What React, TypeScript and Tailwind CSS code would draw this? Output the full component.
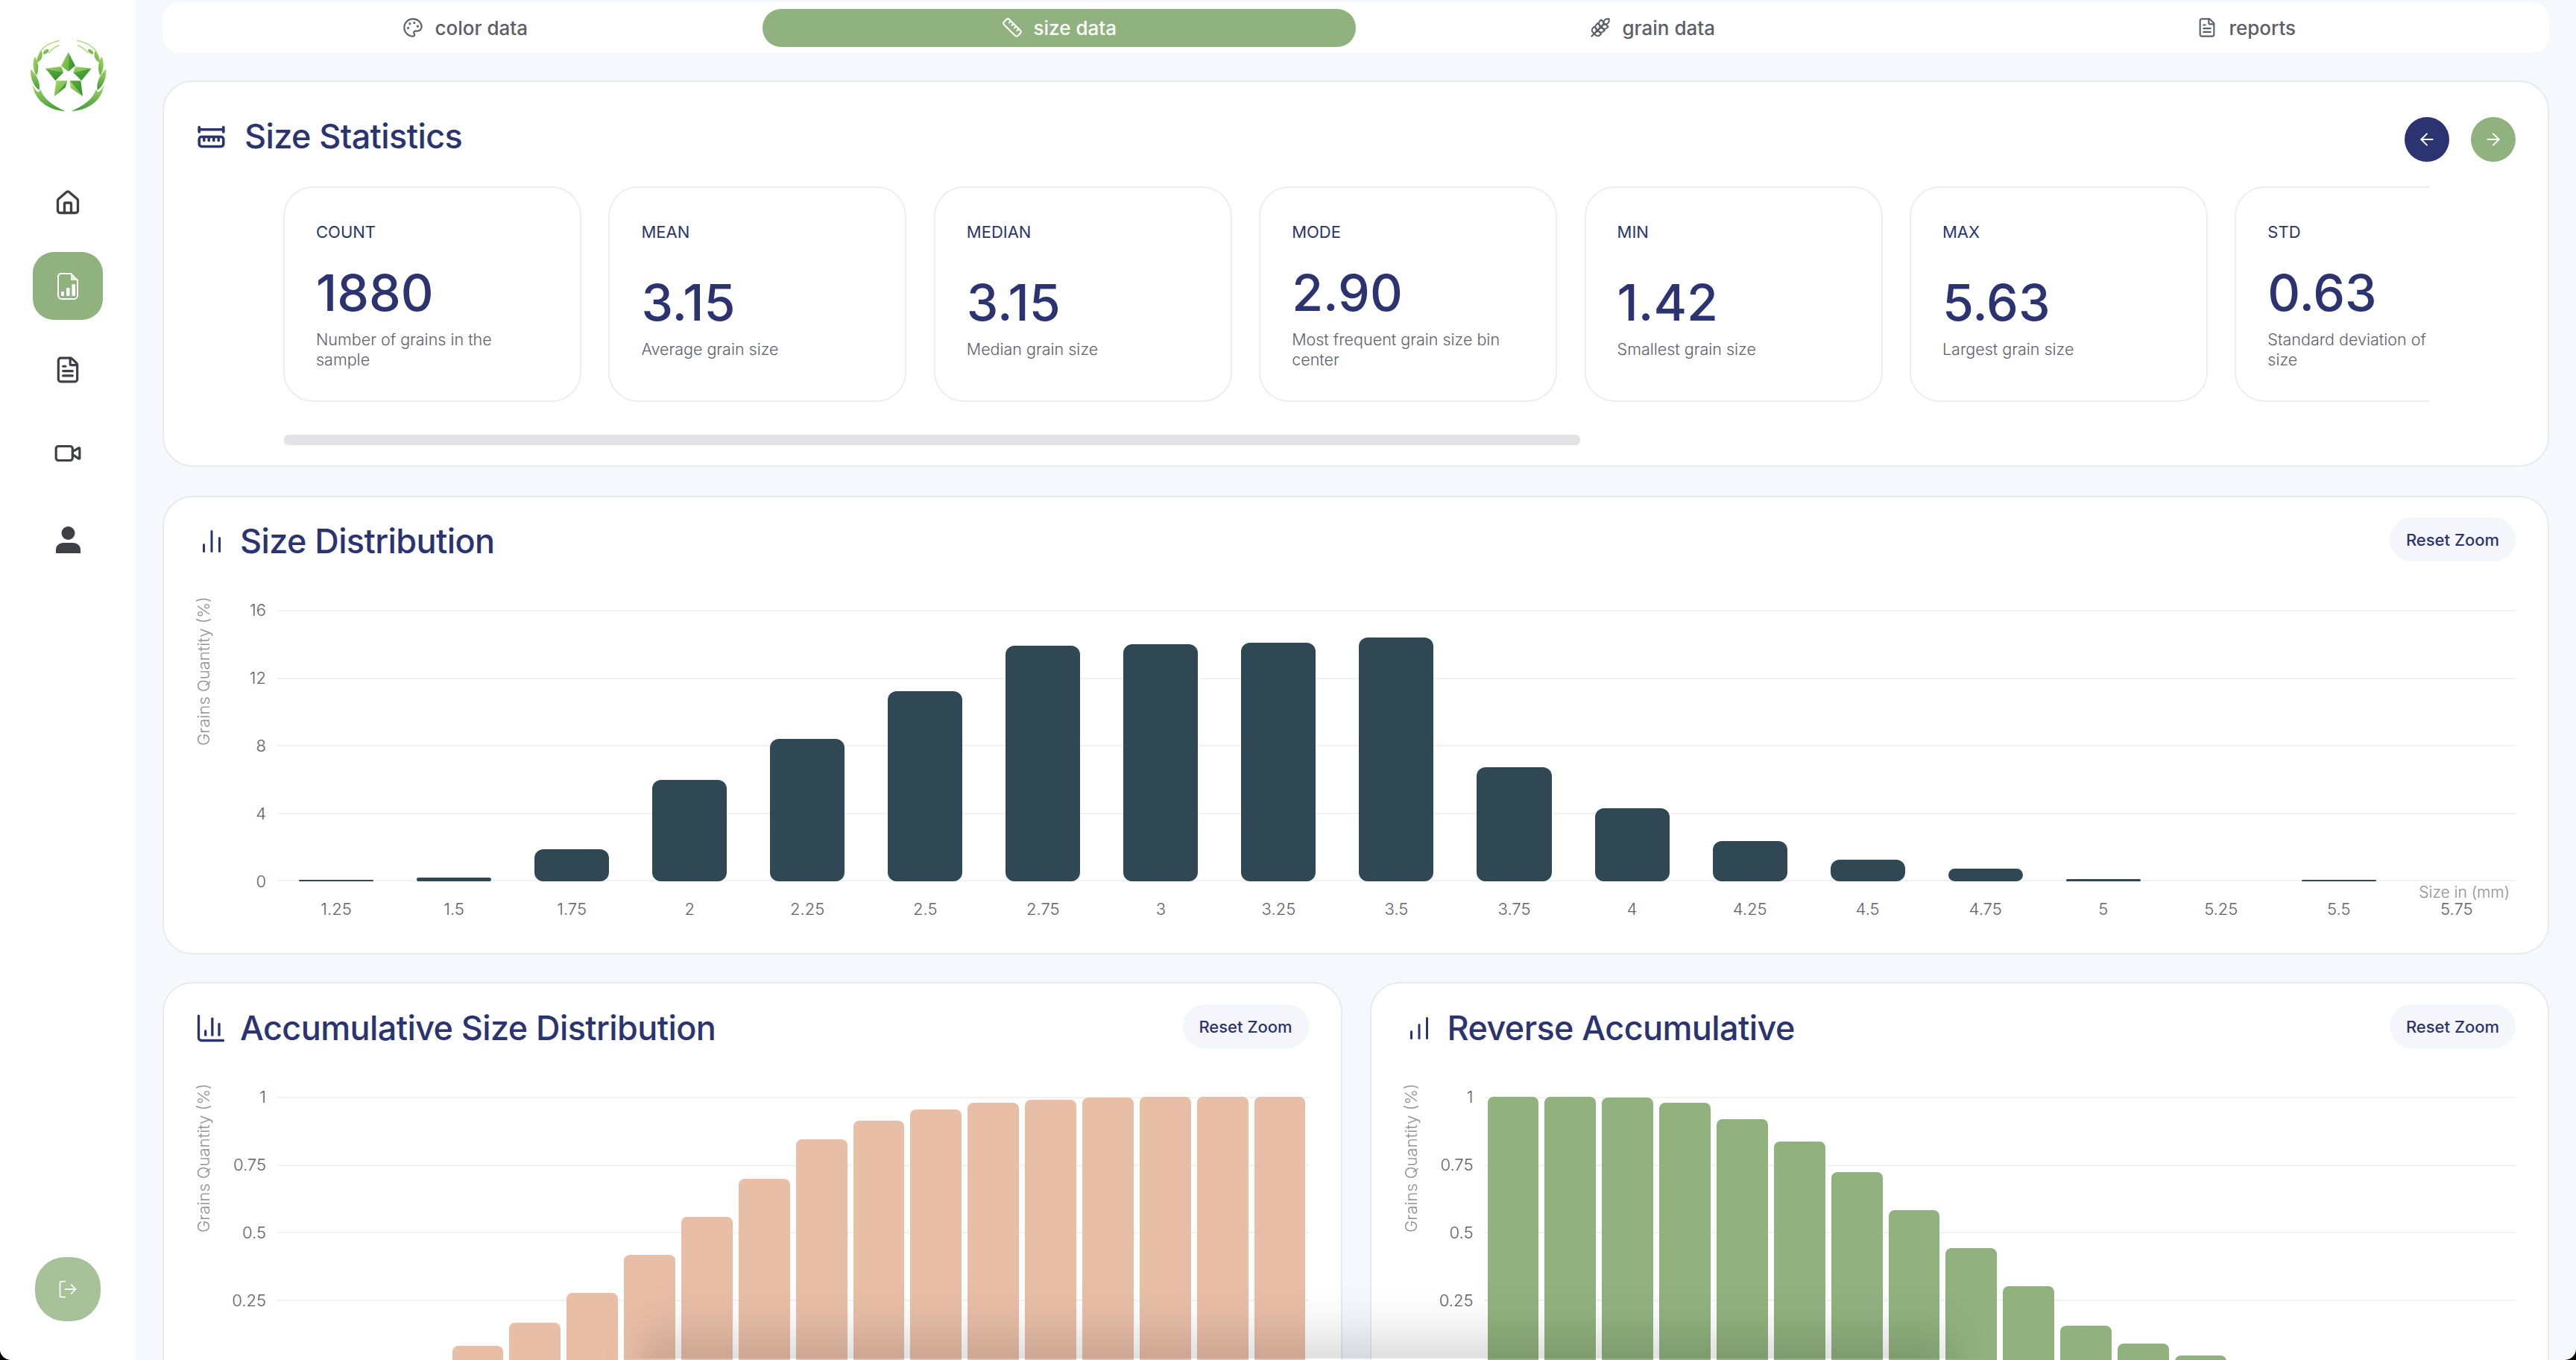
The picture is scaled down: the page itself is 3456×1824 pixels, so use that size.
import {
  ArrowLeft,
  ArrowRight,
  ChartColumn,
  ChartNoAxesColumn,
  ChartNoAxesColumnIncreasing,
  FileText,
  House,
  LogOut,
  Palette,
  Ruler,
  RulerDimensionLine,
  Video,
  Wheat,
} from "lucide-react";
import type { ReactNode } from "react";

const stats = [
  { label: "COUNT", value: "1880", desc: "Number of grains in the sample" },
  { label: "MEAN", value: "3.15", desc: "Average grain size" },
  { label: "MEDIAN", value: "3.15", desc: "Median grain size" },
  { label: "MODE", value: "2.90", desc: "Most frequent grain size bin center" },
  { label: "MIN", value: "1.42", desc: "Smallest grain size" },
  { label: "MAX", value: "5.63", desc: "Largest grain size" },
  { label: "STD", value: "0.63", desc: "Standard deviation of grain size" },
];

const sizeBars = [
  ["1.25", 2],
  ["1.5", 5],
  ["1.75", 43],
  ["2", 136],
  ["2.25", 191],
  ["2.5", 255],
  ["2.75", 316],
  ["3", 318],
  ["3.25", 320],
  ["3.5", 327],
  ["3.75", 153],
  ["4", 98],
  ["4.25", 54],
  ["4.5", 29],
  ["4.75", 17],
  ["5", 3],
  ["5.25", 0],
  ["5.5", 2],
  ["5.75", 0],
] as const;

const accBars = [0, 0, 0, 30, 61, 101, 152, 203, 254, 307, 332, 347, 356, 360, 363, 364, 364, 364];
const revBars = [364, 364, 363, 356, 334, 304, 263, 212, 161, 110, 57, 33, 17, 0, 0, 0, 0, 0];

const Wreath = () => (
  <>
    <path d="M68 222C78 285 130 322 200 328C150 305 112 280 100 238C95 262 80 245 68 222Z" fill="url(#leaf)" />
    <path d="M60 158C58 190 70 225 95 243C100 210 85 180 60 158Z" fill="url(#leaf)" />
    <path d="M78 108C65 130 70 165 84 184C95 160 92 130 78 108Z" fill="url(#light)" />
    <path d="M104 85C90 98 84 115 86 132C104 124 112 105 104 85Z" fill="url(#light)" />
    <ellipse cx="122" cy="88" rx="13" ry="7" transform="rotate(-40 122 88)" fill="#7cc04a" />
    <path d="M96 92C112 66 140 50 178 43" fill="none" stroke="#a9d76a" strokeWidth="4" />
    <path d="M132 94C145 78 158 68 176 62" fill="none" stroke="#a9d76a" strokeWidth="4" />
  </>
);

const Logo = () => (
  <svg viewBox="0 0 420 360" className="h-[120px] w-[140px]">
    <defs>
      <linearGradient id="leaf" x1="0" y1="0" x2="0" y2="1">
        <stop offset="0" stopColor="#a6d66a" />
        <stop offset="1" stopColor="#3f9b35" />
      </linearGradient>
      <linearGradient id="light" x1="0" y1="0" x2="1" y2="1">
        <stop offset="0" stopColor="#a9d76a" />
        <stop offset="1" stopColor="#5eae3a" />
      </linearGradient>
      <linearGradient id="dark" x1="0" y1="0" x2="1" y2="1">
        <stop offset="0" stopColor="#5fb03a" />
        <stop offset="1" stopColor="#2f8a30" />
      </linearGradient>
    </defs>
    <Wreath />
    <g transform="translate(424 0) scale(-1 1)">
      <Wreath />
    </g>
    <polygon points="212,90 183,145 212,168" fill="url(#light)" />
    <polygon points="212,90 240,145 212,168" fill="url(#dark)" />
    <polygon points="120,155 183,148 192,172" fill="url(#light)" />
    <polygon points="120,155 192,172 160,205" fill="url(#dark)" />
    <polygon points="305,155 240,148 232,172" fill="url(#light)" />
    <polygon points="305,155 232,172 265,205" fill="url(#dark)" />
    <polygon points="155,268 163,205 208,205" fill="url(#light)" />
    <polygon points="155,268 208,205 200,232" fill="url(#dark)" />
    <polygon points="270,268 262,205 217,205" fill="url(#dark)" />
    <polygon points="270,268 217,205 222,235" fill="url(#light)" />
  </svg>
);

const FileChartIcon = () => (
  <svg viewBox="0 0 28 36" className="h-[36px] w-[28px]" fill="none" stroke="#fff" strokeWidth="2">
    <path d="M5 1h13l9 9v20a5 5 0 0 1-5 5H6a5 5 0 0 1-5-5V5a4 4 0 0 1 4-4Z" />
    <path d="M18 1l9 9h-9Z" fill="#e9f0e4" stroke="none" />
    <rect x="5" y="25" width="4" height="6" rx="1" fill="#fff" stroke="none" />
    <rect x="12" y="20" width="4.5" height="11" rx="1" fill="#fff" stroke="none" />
    <rect x="19.5" y="15" width="4.5" height="16" rx="1" fill="#fff" stroke="none" />
  </svg>
);

const PersonIcon = () => (
  <svg viewBox="0 0 33 36" className="mt-[8px] h-[36px] w-[33px]" fill="#3f3f46">
    <circle cx="16.5" cy="9" r="9" />
    <path d="M0 36v-5c0-6 6-9 10-9h13c4 0 10 3 10 9v5Z" />
  </svg>
);

const Sidebar = () => (
  <aside className="flex h-full w-[182px] shrink-0 flex-col items-center bg-white pt-[40px]">
    <Logo />
    <nav className="mt-[66px] flex flex-col gap-[21px]">
      <div className="flex h-[91px] w-[94px] items-center justify-center">
        <House size={36} color="#3f3f46" strokeWidth={2.2} />
      </div>
      <div className="flex h-[91px] w-[94px] items-center justify-center rounded-[28px] bg-[#8fb27e]">
        <FileChartIcon />
      </div>
      <div className="flex h-[91px] w-[94px] items-center justify-center">
        <FileText size={38} color="#3f3f46" strokeWidth={2} />
      </div>
      <div className="flex h-[91px] w-[94px] items-center justify-center">
        <Video size={38} color="#3f3f46" strokeWidth={2} />
      </div>
      <div className="flex h-[91px] w-[94px] items-center justify-center">
        <PersonIcon />
      </div>
    </nav>
    <button className="mt-auto mb-[52px] flex h-[86px] w-[88px] items-center justify-center rounded-[40px] bg-[#a7c199]">
      <LogOut size={28} color="#fff" strokeWidth={1.5} />
    </button>
  </aside>
);

const tabs = [
  { name: "color data", icon: <Palette size={28} strokeWidth={1.8} /> },
  { name: "size data", icon: <Ruler size={28} strokeWidth={1.8} />, active: true },
  { name: "grain data", icon: <Wheat size={28} strokeWidth={1.8} /> },
  { name: "reports", icon: <FileText size={28} strokeWidth={1.8} /> },
];

const Tabs = () => (
  <div className="mt-[3px] grid h-[68px] grid-cols-4 items-center rounded-[24px] bg-white px-[8px]">
    {tabs.map((t) =>
      t.active ? (
        <div key={t.name} className="flex h-[51px] items-center justify-center gap-[15px] rounded-[25px] bg-[#8fb27e] text-[26px] font-medium text-white">
          {t.icon}
          {t.name}
        </div>
      ) : (
        <div key={t.name} className="flex h-[51px] items-center justify-center gap-[15px] text-[26px] font-medium text-[#5d5f68]">
          {t.icon}
          {t.name}
        </div>
      ),
    )}
  </div>
);

const StatCard = ({ label, value, desc }: { label: string; value: string; desc: string }) => (
  <div className="flex h-[289px] w-[400px] shrink-0 flex-col rounded-[40px] border-2 border-[#eeeef1] pt-[45px] pr-[50px] pb-[41px] pl-[42px]">
    <div className="h-[28px] text-[22px] leading-[28px] text-[#2b3470]">{label}</div>
    <div className="mt-[26px] flex flex-1 flex-col justify-center">
      <div className="h-[80px] text-[68px] leading-[80px] font-medium text-[#2b3470]">{value}</div>
      <div className="mt-[10px] text-[21.5px] leading-[27px] font-light text-[#5f606a]">{desc}</div>
    </div>
  </div>
);

const Stats = () => (
  <section className="mt-[37px] h-[518px] rounded-[40px] border-2 border-[#e9eaee] bg-white">
    <div className="mt-[48px] flex h-[58px] items-center justify-between pr-[43px] pl-[44px]">
      <div className="-mt-[8px] flex items-center gap-[25px]">
        <RulerDimensionLine size={39} color="#2b3470" strokeWidth={2.2} />
        <h2 className="text-[45px] font-medium tracking-[-0.6px] text-[#2b3470]">Size Statistics</h2>
      </div>
      <div className="flex gap-[29px]">
        <button className="flex h-[60px] w-[60px] items-center justify-center rounded-full bg-[#2b3470]">
          <ArrowLeft size={26} color="#fff" strokeWidth={1.8} />
        </button>
        <button className="flex h-[60px] w-[60px] items-center justify-center rounded-full bg-[#8fb27e]">
          <ArrowRight size={26} color="#fff" strokeWidth={1.8} />
        </button>
      </div>
    </div>
    <div className="mt-[34px] mr-[159px] ml-[160px] flex gap-[36.4px] overflow-hidden">
      {stats.map((s) => (
        <StatCard key={s.label} {...s} />
      ))}
    </div>
    <div className="mt-[44px] ml-[161px] h-[14px] w-[1739px] rounded-[6px] bg-[#e3e3e5]" />
  </section>
);

const ChartHeader = ({ icon, title }: { icon: ReactNode; title: string }) => (
  <div className="flex h-[59px] items-center justify-between pr-[43px] pl-[46px]">
    <div className="flex items-center gap-[20px] pt-[5px]">
      {icon}
      <h2 className="text-[45px] font-medium tracking-[-0.6px] text-[#2b3470]">{title}</h2>
    </div>
    <button className="h-[59px] w-[169px] rounded-[30px] bg-[#f5f6fc] pt-[2px] text-[22px] font-medium text-[#2b3470]">Reset Zoom</button>
  </div>
);

const Plot = ({ ticks, children, footer }: { ticks: string[]; children: ReactNode; footer?: ReactNode }) => (
  <div className="mt-[65px] flex pr-[43px] pl-[42px]">
    <div className="-mt-[14px] h-[196px] w-[22px] shrink-0 rotate-180 text-center text-[22px] leading-[22px] font-light whitespace-nowrap text-[#8f8f94] [writing-mode:vertical-rl]">
      Grains Quantity (%)
    </div>
    <div className="flex h-[364px] w-[73px] shrink-0 flex-col justify-between">
      {ticks.map((t) => (
        <div key={t} className="flex h-0 items-center justify-end text-[22px] font-light text-[#5f606a]">
          {t}
        </div>
      ))}
    </div>
    <div className="relative ml-[15px] flex-1">
      <div className="absolute inset-x-0 top-0 flex h-[364px] flex-col justify-between">
        {ticks.map((t) => (
          <div key={t} className="h-0 border-t-2 border-[#f2f2f3]" />
        ))}
      </div>
      <div className="relative flex h-[364px] items-end">{children}</div>
      {footer}
    </div>
  </div>
);

const SizeDistribution = () => (
  <section className="mt-[39px] h-[615px] rounded-[40px] border-2 border-[#e9eaee] bg-white pt-[27px]">
    <ChartHeader icon={<ChartNoAxesColumn size={36} color="#2b3470" strokeWidth={2} />} title="Size Distribution" />
    <Plot
      ticks={["16", "12", "8", "4", "0"]}
      footer={
        <>
          <div className="absolute top-[365px] right-[8px] text-[21px] leading-[28px] font-light text-[#8f8f94]">Size in (mm)</div>
          <div className="mt-[23px] flex">
            {sizeBars.map(([x]) => (
              <div key={x} className="flex-1 text-center text-[22px] leading-[28px] font-light text-[#5f606a]">
                {x}
              </div>
            ))}
          </div>
        </>
      }
    >
      {sizeBars.map(([x, h]) => (
        <div key={x} className="flex flex-1 items-end px-[29px]">
          <div className="w-full rounded-[12px] bg-[#304754]" style={{ height: h }} />
        </div>
      ))}
    </Plot>
  </section>
);

const Accumulative = ({ title, icon, bars, color }: { title: string; icon: ReactNode; bars: number[]; color: string }) => (
  <section className="h-[620px] flex-1 rounded-[40px] border-2 border-[#e9eaee] bg-white pt-[28px]">
    <ChartHeader icon={icon} title={title} />
    <Plot ticks={["1", "0.75", "0.5", "0.25", "0"]}>
      {bars.map((h, i) => (
        <div key={i} className="flex flex-1 items-end px-[4px]">
          <div className={`w-full rounded-t-[8px] ${color}`} style={{ height: h }} />
        </div>
      ))}
    </Plot>
  </section>
);

export default function App() {
  return (
    <div className="h-[1824px] w-[3456px] overflow-hidden bg-black font-['Inter',sans-serif]">
      <div className="relative flex h-full overflow-hidden rounded-b-[15px] bg-[#f6f8fd]">
        <Sidebar />
        <main className="min-w-0 flex-1 pr-[36px] pl-[36px]">
          <Tabs />
          <Stats />
          <SizeDistribution />
          <div className="mt-[37px] flex gap-[37px]">
            <Accumulative
              title="Accumulative Size Distribution"
              icon={<ChartColumn size={44} color="#2b3470" strokeWidth={1.8} className="-mr-[3px] -ml-[5px]" />}
              bars={accBars}
              color="bg-[#e9bea7]"
            />
            <Accumulative title="Reverse Accumulative" icon={<ChartNoAxesColumnIncreasing size={36} color="#2b3470" strokeWidth={2} />} bars={revBars} color="bg-[#91b27f]" />
          </div>
        </main>
        <div className="pointer-events-none absolute bottom-[2px] left-[760px] h-[150px] w-[1960px] overflow-hidden">
          <div className="absolute inset-x-[100px] top-[80px] bottom-[-40px] bg-linear-to-t from-black/20 to-transparent blur-[24px]" />
        </div>
      </div>
    </div>
  );
}
